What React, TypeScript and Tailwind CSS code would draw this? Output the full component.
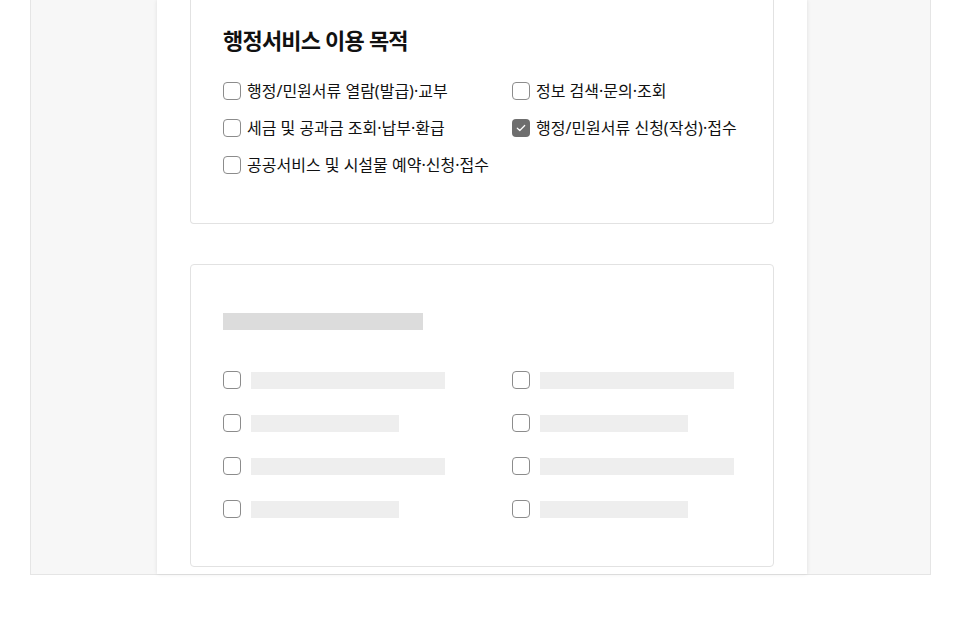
const purposes = [
  { label: '행정/민원서류 열람(발급)·교부', checked: false },
  { label: '정보 검색·문의·조회', checked: false },
  { label: '세금 및 공과금 조회·납부·환급', checked: false },
  { label: '행정/민원서류 신청(작성)·접수', checked: true },
  { label: '공공서비스 및 시설물 예약·신청·접수', checked: false },
]

const skeletonRows = [194, 194, 148, 148, 194, 194, 148, 148]

function Checkbox({ checked }: { checked?: boolean }) {
  if (checked) {
    return (
      <span className="w-[18px] h-[18px] rounded-[4px] bg-[#6e6e6e] flex items-center justify-center flex-shrink-0">
        <svg width="10" height="8" viewBox="0 0 10 8" fill="none">
          <path d="M1.3 4.2L3.8 6.5L8.7 1.5" stroke="white" strokeWidth="1.2" strokeLinecap="round" strokeLinejoin="round" />
        </svg>
      </span>
    )
  }
  return <span className="w-[18px] h-[18px] rounded-[4px] border border-[#8c8c8c] bg-white flex-shrink-0" />
}

export default function App() {
  return (
    <div
      className="w-full h-[637px] bg-white pl-[30px]"
      style={{ fontFamily: '"Noto Sans", "Noto Sans CJK KR", sans-serif' }}
    >
      <div className="w-[901px] h-[575px] bg-[#f7f7f7] border-x border-b border-[#e5e5e5] pl-[126px]">
        <div className="w-[650px] h-full bg-white shadow-[0_0_4px_rgba(0,0,0,0.1)] px-[33px] flex flex-col">
          <section className="border-x border-b border-[#e2e2e2] rounded-b-[4px] pt-[25px] px-[32px] pb-[49px]">
            <h2 className="text-[22px] leading-[30px] font-bold text-[#111] tracking-[-0.8px]">행정서비스 이용 목적</h2>
            <div className="grid grid-cols-[289px_1fr] gap-y-[19px] mt-[27px]">
              {purposes.map(p => (
                <label key={p.label} className="flex items-center gap-[6px] h-[18px]">
                  <Checkbox checked={p.checked} />
                  <span className="text-[16px] leading-[18px] text-[#111] whitespace-nowrap">{p.label}</span>
                </label>
              ))}
            </div>
          </section>

          <section className="mt-[40px] border border-[#e2e2e2] rounded-[4px] pt-[48px] px-[32px] pb-[48px]">
            <div className="w-[200px] h-[17px] bg-[#dcdcdc]" />
            <div className="grid grid-cols-[289px_1fr] gap-y-[25px] mt-[41px]">
              {skeletonRows.map((w, i) => (
                <div key={i} className="flex items-center gap-[10px] h-[18px]">
                  <Checkbox />
                  <span className="h-[17px] bg-[#eeeeee]" style={{ width: w }} />
                </div>
              ))}
            </div>
          </section>
        </div>
      </div>
    </div>
  )
}
